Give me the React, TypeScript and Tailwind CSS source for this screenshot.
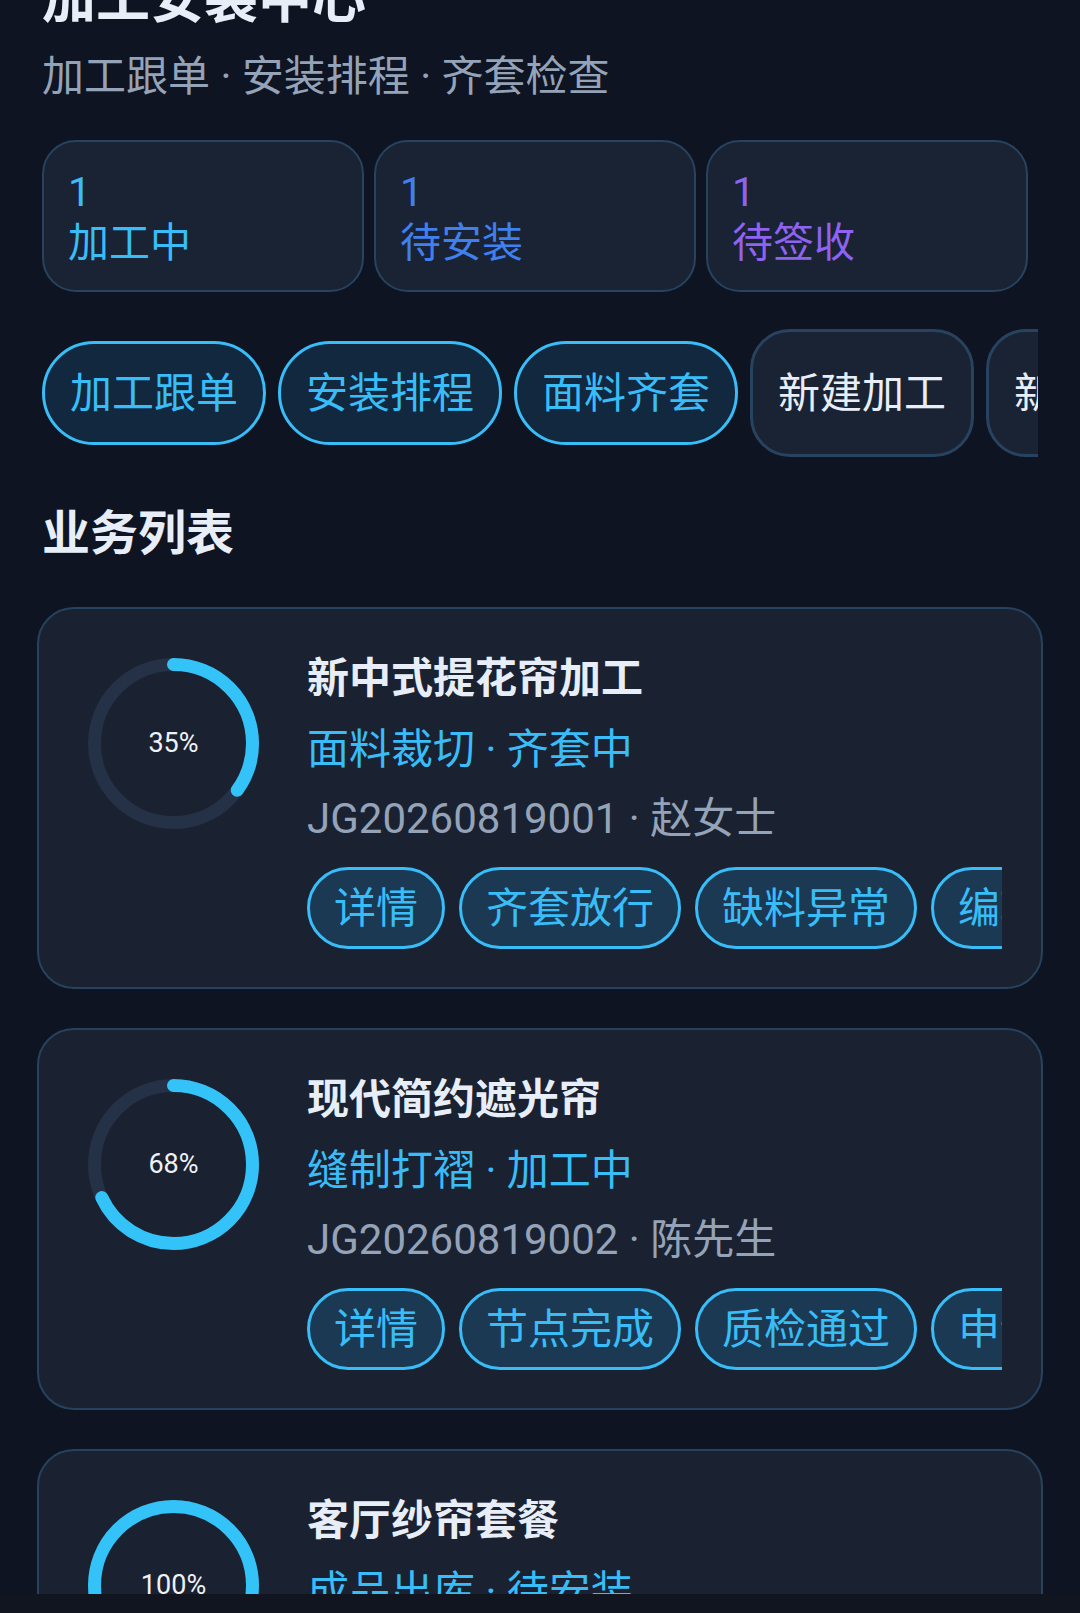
import React from 'react';

type Stat = { value: number; label: string; color: string };
type Order = {
  title: string;
  status: string;
  code: string;
  customer: string;
  progress: number;
  actions: string[];
};

const stats: Stat[] = [
  { value: 1, label: '加工中', color: 'text-[#38bdf8]' },
  { value: 1, label: '待安装', color: 'text-[#3f80ee]' },
  { value: 1, label: '待签收', color: 'text-[#8f62f2]' },
];

const tabs = [
  { label: '加工跟单', active: true },
  { label: '安装排程', active: true },
  { label: '面料齐套', active: true },
  { label: '新建加工', active: false },
  { label: '新建安装', active: false },
];

const orders: Order[] = [
  {
    title: '新中式提花帘加工',
    status: '面料裁切 · 齐套中',
    code: 'JG20260819001',
    customer: '赵女士',
    progress: 35,
    actions: ['详情', '齐套放行', '缺料异常', '编辑'],
  },
  {
    title: '现代简约遮光帘',
    status: '缝制打褶 · 加工中',
    code: 'JG20260819002',
    customer: '陈先生',
    progress: 68,
    actions: ['详情', '节点完成', '质检通过', '申请安装'],
  },
  {
    title: '客厅纱帘套餐',
    status: '成品出库 · 待安装',
    code: 'JG20260819003',
    customer: '王女士',
    progress: 100,
    actions: ['详情', '安装派单', '预约上门', '签收'],
  },
];

function ProgressRing({ value }: { value: number }) {
  const r = 79;
  const c = 2 * Math.PI * r;
  return (
    <div className="relative w-[171px] h-[171px] shrink-0 mt-[13px]">
      <svg width="171" height="171" viewBox="0 0 171 171" className="-rotate-90">
        <circle cx="85.5" cy="85.5" r={r} fill="none" stroke="#243146" strokeWidth="13" />
        <circle
          cx="85.5"
          cy="85.5"
          r={r}
          fill="none"
          stroke="#34c3f8"
          strokeWidth="13"
          strokeLinecap="round"
          strokeDasharray={`${(c * value) / 100} ${c}`}
        />
      </svg>
      <div className="absolute inset-0 flex items-center justify-center text-[27px] text-[#eef2f8]">
        {value}%
      </div>
    </div>
  );
}

function OrderCard({ order }: { order: Order }) {
  return (
    <div className="flex items-start gap-[48px] rounded-[37px] border-2 border-[#26425e] bg-[#1a2232] pl-[49px] pr-[39px] pt-[36px] pb-[38px]">
      <ProgressRing value={order.progress} />
      <div className="flex-1 min-w-0">
        <div className="text-[42px] leading-[68px] font-bold text-[#e8eef8] whitespace-nowrap">
          {order.title}
        </div>
        <div className="mt-[3px] text-[42px] leading-[68px] text-[#38bdf8] whitespace-nowrap">
          {order.status}
        </div>
        <div className="mt-[1px] text-[42px] leading-[68px] text-[#94a3b8] whitespace-nowrap">
          {order.code} · {order.customer}
        </div>
        <div className="mt-[14px] flex gap-[14px] overflow-hidden">
          {order.actions.map((a) => (
            <div
              key={a}
              className="shrink-0 h-[82px] flex items-center rounded-full border-[3px] border-[#38bdf8] bg-[#1c3953] px-[24px] text-[42px] text-[#38bdf8] whitespace-nowrap"
            >
              {a}
            </div>
          ))}
        </div>
      </div>
    </div>
  );
}

export default function App() {
  return (
    <div
      className="relative h-[1613px] overflow-hidden bg-[#0e1421]"
      style={{ fontFamily: 'Roboto, "Noto Sans CJK SC", sans-serif' }}
    >
      <div className="px-[42px]">
        <h1 className="-mt-[34px] text-[54px] leading-[68px] font-bold text-[#e8eef8]">加工安装中心</h1>
        <p className="mt-[14px] text-[42px] leading-[57px] text-[#94a3b8]">
          加工跟单 · 安装排程 · 齐套检查
        </p>

        <div className="mt-[35px] grid w-[986px] grid-cols-3 gap-[10px]">
          {stats.map((s) => (
            <div
              key={s.label}
              className={`h-[152px] rounded-[34px] border-2 border-[#27435f] bg-[#1a2334] pl-[24px] pt-[26px] ${s.color}`}
            >
              <div className="text-[41px] leading-[48px]">{s.value}</div>
              <div className="mt-[3px] text-[41px] leading-[48px]">{s.label}</div>
            </div>
          ))}
        </div>

        <div className="mt-[37px] flex h-[128px] w-[996px] items-center gap-[12px] overflow-hidden">
          {tabs.map((t) =>
            t.active ? (
              <div
                key={t.label}
                className="shrink-0 h-[104px] flex items-center rounded-full border-[3px] border-[#38bdf8] bg-[#12283e] px-[25px] text-[42px] text-[#38bdf8] whitespace-nowrap"
              >
                {t.label}
              </div>
            ) : (
              <div
                key={t.label}
                className="shrink-0 h-[128px] flex items-center rounded-[40px] border-[3px] border-[#27435f] bg-[#1a2334] px-[25px] text-[42px] text-[#e8eef8] whitespace-nowrap"
              >
                {t.label}
              </div>
            )
          )}
        </div>

        <h2 className="mt-[46px] text-[48px] leading-[61px] font-bold text-[#e8eef8]">业务列表</h2>

        <div className="-mx-[5px] mt-[43px] flex flex-col gap-[39px]">
          {orders.map((o) => (
            <OrderCard key={o.code} order={o} />
          ))}
        </div>
      </div>

      <div className="fixed bottom-0 left-0 right-0 h-[19px] bg-[#10151f]" />
    </div>
  );
}
